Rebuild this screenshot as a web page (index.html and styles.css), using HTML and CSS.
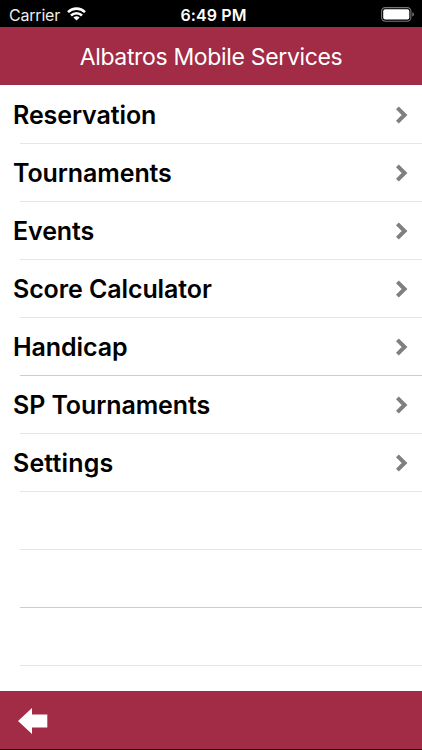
FILE: index.html
```html
<!DOCTYPE html>
<html lang="en">
<head>
    <meta charset="UTF-8">
    <meta name="viewport" content="width=device-width, initial-scale=1.0">
    <title>Albatros Mobile Services</title>
    <link rel="stylesheet" href="styles.css">
</head>
<body>
    <!-- Status bar -->
    <div class="status">
        <div class="carrier">
            <span>Carrier</span>
            <svg width="19" height="14" viewBox="0 0 19 14">
                <g fill="none" stroke="#fff" stroke-width="2.6">
                    <path d="M1 5.1a12.2 12.2 0 0 1 17 0"/>
                    <path d="M4 8.5a7.9 7.9 0 0 1 11 0"/>
                </g>
                <path d="M9.5 13.5L6.4 10.5a4.3 4.3 0 0 1 6.2 0z" fill="#fff"/>
            </svg>
        </div>
        <span class="time">6:49 PM</span>
        <svg class="battery" width="34" height="15" viewBox="0 0 34 15">
            <rect x=".6" y=".6" width="29.3" height="13.6" rx="3.6" fill="none" stroke="#777" stroke-width="1.1"/>
            <rect x="2.2" y="2.2" width="26.1" height="10.4" rx="2" fill="#fff"/>
            <path d="M31.3 5.2q1.7.6 1.7 2.2t-1.7 2.2z" fill="#777"/>
        </svg>
    </div>

    <header>
        <h1>Albatros Mobile Services</h1>
    </header>

    <!-- Menu -->
    <ul class="menu">
        <li><span>Reservation</span><svg class="arrow" width="14" height="20" viewBox="0 0 14 20"><path d="M2.4 2.8L9.6 10l-7.2 7.2"/></svg></li>
        <li><span>Tournaments</span><svg class="arrow" width="14" height="20" viewBox="0 0 14 20"><path d="M2.4 2.8L9.6 10l-7.2 7.2"/></svg></li>
        <li><span>Events</span><svg class="arrow" width="14" height="20" viewBox="0 0 14 20"><path d="M2.4 2.8L9.6 10l-7.2 7.2"/></svg></li>
        <li><span>Score Calculator</span><svg class="arrow" width="14" height="20" viewBox="0 0 14 20"><path d="M2.4 2.8L9.6 10l-7.2 7.2"/></svg></li>
        <li class="dark"><span>Handicap</span><svg class="arrow" width="14" height="20" viewBox="0 0 14 20"><path d="M2.4 2.8L9.6 10l-7.2 7.2"/></svg></li>
        <li><span>SP Tournaments</span><svg class="arrow" width="14" height="20" viewBox="0 0 14 20"><path d="M2.4 2.8L9.6 10l-7.2 7.2"/></svg></li>
        <li><span class="wide">Settings</span><svg class="arrow" width="14" height="20" viewBox="0 0 14 20"><path d="M2.4 2.8L9.6 10l-7.2 7.2"/></svg></li>
        <li></li>
        <li class="dark"></li>
        <li></li>
    </ul>

    <footer>
        <svg width="30" height="26" viewBox="0 0 30 26"><path d="M0 13L14 0v6.6h15.3v12.8H14V26z" fill="#fff"/></svg>
    </footer>
</body>
</html>
```
FILE: styles.css
```css
* {
    box-sizing: border-box;
}
body {
    display: flex;
    flex-direction: column;
    height: 750px;
    margin: 0;
    font-family: Inter, "Liberation Sans", sans-serif;
    background-color: #fff;
    overflow: hidden;
}
.status {
    display: grid;
    grid-template-columns: 1fr auto 1fr;
    align-items: center;
    height: 27px;
    padding: 2px 7px 0 9px;
    background-color: #000;
    color: #fff;
    font-size: 16px;
}
.carrier {
    display: flex;
    align-items: center;
    gap: 7px;
    color: #eee;
    letter-spacing: -0.2px;
}
.carrier svg {
    margin-top: -2px;
}
.time {
    padding-left: 3px;
    font-weight: 600;
    letter-spacing: 0.1px;
}
.battery {
    justify-self: end;
    margin-top: -1px;
}
header {
    height: 58px;
    background-color: #a22b45;
    color: #fff;
}
h1 {
    margin: 0;
    font-size: 23px;
    font-weight: 400;
    line-height: 60px;
    letter-spacing: -0.34px;
    text-align: center;
}
.menu {
    flex: 1;
    margin: 0;
    padding: 0;
    list-style: none;
    overflow: hidden;
}
.menu li {
    display: flex;
    align-items: center;
    justify-content: space-between;
    height: 58px;
    padding: 0 13px 0 13px;
    background: linear-gradient(#e6e6e6, #e6e6e6) 20px bottom / 100% 1px no-repeat;
    font-size: 25px;
    font-weight: 600;
    letter-spacing: -0.1px;
}
.menu li.dark {
    background-image: linear-gradient(#cdcdcd, #cdcdcd);
}
.menu li:first-child {
    height: 59px;
    padding-top: 1px;
}
.menu .wide {
    letter-spacing: 0.15px;
}
.arrow {
    fill: none;
    stroke: #808080;
    stroke-width: 4;
}
footer {
    display: flex;
    align-items: center;
    height: 59px;
    padding: 2px 0 0 18px;
    background-color: #a22b45;
    border-bottom: 1px solid #200008;
}
```
